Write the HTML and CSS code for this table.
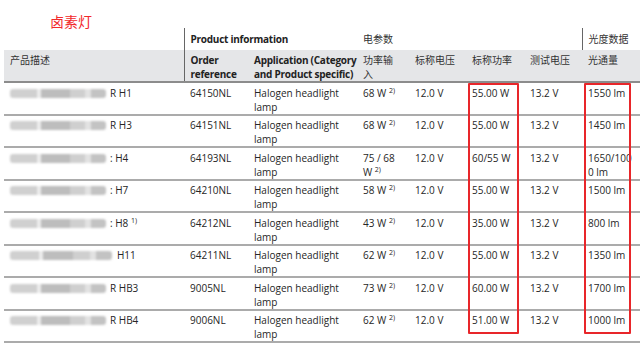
FILE: index.html
```html
<!DOCTYPE html>
<html lang="zh">
<head>
<meta charset="utf-8">
<link rel="stylesheet" href="styles.css">
</head>
<body>
<div class="page">
  <div class="title">卤素灯</div>
  <table class="spec">
    <colgroup>
      <col class="c1"><col class="c2"><col class="c3"><col class="c4"><col class="c5"><col class="c6"><col class="c7"><col class="c8">
    </colgroup>
    <thead>
      <tr class="group">
        <th></th>
        <th colspan="2" class="sep lat">Product information</th>
        <th colspan="4" class="cjk">电参数</th>
        <th class="sep cjk">光度数据</th>
      </tr>
      <tr class="cols">
        <th class="cjk">产品描述</th>
        <th class="sep lat">Order reference</th>
        <th class="lat app">Application (Category and Product specific)</th>
        <th class="cjk pin">功率输入</th>
        <th class="cjk">标称电压</th>
        <th class="cjk">标称功率</th>
        <th class="cjk">测试电压</th>
        <th class="cjk">光通量</th>
      </tr>
    </thead>
    <tbody>
      <tr><td><span class="blur"></span>R H1</td><td>64150NL</td><td>Halogen headlight lamp</td><td class="pin">68 W <sup>2)</sup></td><td>12.0 V</td><td>55.00 W</td><td>13.2 V</td><td class="lm">1550 lm</td></tr>
      <tr><td><span class="blur"></span>R H3</td><td>64151NL</td><td>Halogen headlight lamp</td><td class="pin">68 W <sup>2)</sup></td><td>12.0 V</td><td>55.00 W</td><td>13.2 V</td><td class="lm">1450 lm</td></tr>
      <tr><td><span class="blur"></span>: H4</td><td>64193NL</td><td>Halogen headlight lamp</td><td class="pin">75 / 68 W <sup>2)</sup></td><td>12.0 V</td><td>60/55 W</td><td>13.2 V</td><td class="lm">1650/1000 lm</td></tr>
      <tr><td><span class="blur"></span>: H7</td><td>64210NL</td><td>Halogen headlight lamp</td><td class="pin">58 W <sup>2)</sup></td><td>12.0 V</td><td>55.00 W</td><td>13.2 V</td><td class="lm">1500 lm</td></tr>
      <tr><td><span class="blur"></span>: H8 <sup>1)</sup></td><td>64212NL</td><td>Halogen headlight lamp</td><td class="pin">43 W <sup>2)</sup></td><td>12.0 V</td><td>35.00 W</td><td>13.2 V</td><td class="lm">800 lm</td></tr>
      <tr><td><span class="blur wide"></span>H11</td><td>64211NL</td><td>Halogen headlight lamp</td><td class="pin">62 W <sup>2)</sup></td><td>12.0 V</td><td>55.00 W</td><td>13.2 V</td><td class="lm">1350 lm</td></tr>
      <tr><td><span class="blur"></span>R HB3</td><td>9005NL</td><td>Halogen headlight lamp</td><td class="pin">73 W <sup>2)</sup></td><td>12.0 V</td><td>60.00 W</td><td>13.2 V</td><td class="lm">1700 lm</td></tr>
      <tr><td><span class="blur"></span>R HB4</td><td>9006NL</td><td>Halogen headlight lamp</td><td class="pin">62 W <sup>2)</sup></td><td>12.0 V</td><td>51.00 W</td><td>13.2 V</td><td class="lm">1000 lm</td></tr>
    </tbody>
  </table>
  <div class="mark mark-power"></div>
  <div class="mark mark-flux"></div>
</div>
</body>
</html>
```
FILE: styles.css
```css
html, body {
  margin: 0;
  padding: 0;
  background: #fff;
}
body {
  font-family: "Open Sans", "Noto Sans CJK SC", sans-serif;
  font-size: 10px;
  color: #222;
}
.page {
  position: relative;
  width: 640px;
  height: 347px;
  overflow: hidden;
}
.title {
  height: 16px;
  padding: 12px 0 0 50px;
  font-family: "Noto Sans CJK SC", sans-serif;
  font-size: 14px;
  line-height: 18px;
  color: #f2292b;
}
.spec {
  margin-left: 4px;
  width: 636px;
  border-collapse: collapse;
  table-layout: fixed;
}
.c1 { width: 180px; }
.c2 { width: 64px; }
.c3 { width: 109px; }
.c4 { width: 52px; }
.c5 { width: 57px; }
.c6 { width: 58px; }
.c7 { width: 58px; }
.c8 { width: 58px; }

.spec th {
  text-align: left;
  vertical-align: top;
  padding: 0 6px;
  line-height: 14px;
}
.spec th.lat { font-weight: 700; color: #222; letter-spacing: -0.25px; }
.spec th.app { padding-right: 0; }
.spec th.cjk { font-weight: 400; color: #333; font-family: "Noto Sans CJK SC", sans-serif; }
.spec th.sep { border-left: 1px solid #666; }
.spec th.pin { padding-right: 12px; }

.group th {
  height: 22px;
  padding-top: 4px;
  box-sizing: border-box;
}
.cols th {
  background: #e5e6e8;
  height: 32px;
  padding-top: 3px;
  box-sizing: border-box;
  border-bottom: 2px solid #8c8c8c;
}

.spec td {
  vertical-align: top;
  padding: 3px 6px 0 6px;
  line-height: 14px;
  border-bottom: 2px solid #ababab;
  color: #262626;
}
.spec tbody tr:nth-child(even) td { padding-top: 2px; }
.spec td.pin { padding-right: 10px; }
.spec td.lm { overflow-wrap: anywhere; word-break: break-all; }

sup {
  font-size: 7px;
  line-height: 0;
  vertical-align: 4px;
}

.blur {
  display: inline-block;
  width: 96px;
  height: 9px;
  margin-right: 4px;
  vertical-align: -1px;
  border-radius: 3px;
  background: linear-gradient(90deg, #d0d0d0 0 28%, #ececec 28% 32%, #bdbdbd 32% 62%, #cfcfcf 62% 78%, #e2e2e2 78% 84%, #c3c3c3 84% 100%);
  filter: blur(1px);
}
.blur.wide { width: 102px; margin-right: 5px; }

.mark {
  position: absolute;
  top: 83px;
  height: 251px;
  box-sizing: border-box;
  border: 2px solid #e8262a;
  border-radius: 1px;
}
.mark-power { left: 468px; width: 51px; }
.mark-flux { left: 584px; width: 47px; }
```
